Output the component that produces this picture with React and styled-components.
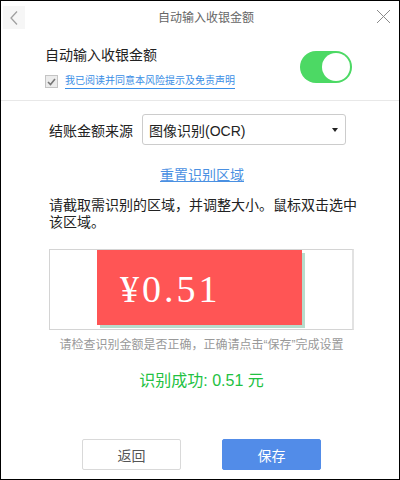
import styled, { createGlobalStyle } from 'styled-components';

const GlobalStyle = createGlobalStyle`
  html, body {
    margin: 0;
    padding: 0;
    background: #fff;
  }
  * {
    box-sizing: border-box;
  }
`;

const Window = styled.div`
  width: 400px;
  height: 480px;
  border: 1px solid #000;
  background: #fff;
  display: flex;
  flex-direction: column;
  font-family: "Liberation Sans", "Noto Sans CJK SC", sans-serif;
  color: #333;
`;

const Header = styled.div`
  height: 30px;
  display: flex;
  align-items: center;
  padding: 0 8px 0 2px;
`;

const BackButton = styled.button`
  width: 22px;
  height: 23px;
  margin-top: 3px;
  padding: 0;
  border: none;
  background: #f6f6f6;
  display: flex;
  align-items: center;
  justify-content: center;
  cursor: pointer;
`;

const HeaderTitle = styled.div`
  flex: 1;
  text-align: center;
  font-size: 12px;
  color: #666;
  padding-left: 12px;
`;

const CloseButton = styled.button`
  width: 16px;
  height: 16px;
  padding: 0;
  border: none;
  background: none;
  display: flex;
  align-items: center;
  justify-content: center;
  cursor: pointer;
`;

const TopSection = styled.div`
  height: 70px;
  padding: 3px 47px 0 44px;
  border-bottom: 1px solid #e8e8e8;
  display: flex;
  align-items: center;
  justify-content: space-between;
`;

const TopLeft = styled.div`
  display: flex;
  flex-direction: column;
  gap: 9px;
`;

const SectionTitle = styled.div`
  font-size: 14px;
  line-height: 20px;
  color: #222;
`;

const AgreeRow = styled.label`
  display: flex;
  align-items: center;
  gap: 7px;
  height: 16px;
`;

const CheckBox = styled.span`
  width: 13px;
  height: 13px;
  border: 1px solid #c4c4c4;
  background: #ececec;
  display: flex;
  align-items: center;
  justify-content: center;
`;

const AgreeLink = styled.a`
  font-size: 10px;
  line-height: 14px;
  color: #3a8ee6;
  text-decoration: none;
  border-bottom: 1px solid #3a8ee6;
`;

const Toggle = styled.div`
  width: 52px;
  height: 32px;
  border-radius: 16px;
  background: ${(p) => (p.$on ? '#4cd964' : '#ddd')};
  display: flex;
  align-items: center;
  justify-content: ${(p) => (p.$on ? 'flex-end' : 'flex-start')};
  padding: 2px;
`;

const Knob = styled.span`
  width: 28px;
  height: 28px;
  border-radius: 50%;
  background: #fff;
`;

const Body = styled.div`
  flex: 1;
  display: flex;
  flex-direction: column;
  padding: 13px 0 9px 48px;
`;

const SourceRow = styled.div`
  display: flex;
  align-items: center;
  height: 31px;
`;

const SourceLabel = styled.div`
  width: 93px;
  font-size: 14px;
  color: #222;
`;

const Select = styled.div`
  width: 204px;
  height: 31px;
  border: 1px solid #ccc;
  border-radius: 3px;
  display: flex;
  align-items: center;
  justify-content: space-between;
  padding: 0 7px 0 6px;
  font-size: 14px;
  color: #222;
`;

const Caret = styled.span`
  width: 0;
  height: 0;
  border-left: 3px solid transparent;
  border-right: 3px solid transparent;
  border-top: 4px solid #222;
`;

const ResetLink = styled.a`
  align-self: flex-start;
  margin: 21px 0 0 111px;
  font-size: 14px;
  line-height: 19px;
  color: #4a90e2;
  text-decoration: underline;
`;

const Instruction = styled.p`
  width: 312px;
  margin: 12px 0 0;
  font-size: 14px;
  line-height: 17px;
  color: #222;
`;

const CaptureBox = styled.div`
  width: 305px;
  height: 81px;
  margin-top: 18px;
  border: 1px solid #d4d4d4;
  border-right: 2px solid #e2e2e2;
  display: flex;
  align-items: flex-start;
`;

const Capture = styled.div`
  width: 205px;
  height: 75px;
  margin-left: 47px;
  background: #ff5555;
  box-shadow: 3px 3px 0 #b8dccc;
  display: flex;
  align-items: center;
  padding: 2px 0 0 23px;
  font-family: "Liberation Serif", "DejaVu Serif", serif;
  font-size: 38px;
  letter-spacing: 3px;
  color: #fff;
`;

const Hint = styled.div`
  width: 305px;
  margin-top: 7px;
  text-align: center;
  font-size: 12px;
  line-height: 16px;
  color: #999;
`;

const Success = styled.div`
  width: 305px;
  margin-top: 17px;
  text-align: center;
  font-size: 16px;
  line-height: 22px;
  color: #22c142;
`;

const Footer = styled.div`
  margin-top: auto;
  margin-left: 33px;
  display: flex;
  gap: 41px;
`;

const Button = styled.button`
  width: 99px;
  height: 31px;
  border-radius: 2px;
  font-family: inherit;
  font-size: 14px;
  cursor: pointer;
  border: 1px solid ${(p) => (p.$primary ? '#528ce8' : '#d9d9d9')};
  background: ${(p) => (p.$primary ? '#528ce8' : '#fff')};
  color: ${(p) => (p.$primary ? '#fff' : '#555')};
`;

const App = () => {
  return (
    <Window>
      <GlobalStyle />
      <Header>
        <BackButton aria-label="返回">
          <svg width="10" height="16" viewBox="0 0 10 16">
            <polyline points="8,1.5 2,8 8,14.5" fill="none" stroke="#a0a0a0" strokeWidth="1.3" />
          </svg>
        </BackButton>
        <HeaderTitle>自动输入收银金额</HeaderTitle>
        <CloseButton aria-label="关闭">
          <svg width="15" height="15" viewBox="0 0 15 15">
            <line x1="1" y1="1" x2="14" y2="14" stroke="#8a8a8a" strokeWidth="1" />
            <line x1="14" y1="1" x2="1" y2="14" stroke="#8a8a8a" strokeWidth="1" />
          </svg>
        </CloseButton>
      </Header>

      <TopSection>
        <TopLeft>
          <SectionTitle>自动输入收银金额</SectionTitle>
          <AgreeRow>
            <CheckBox>
              <svg width="9" height="8" viewBox="0 0 9 8">
                <polyline points="1,4 3.5,6.5 8,1" fill="none" stroke="#777" strokeWidth="1.6" />
              </svg>
            </CheckBox>
            <AgreeLink>我已阅读并同意本风险提示及免责声明</AgreeLink>
          </AgreeRow>
        </TopLeft>
        <Toggle $on>
          <Knob />
        </Toggle>
      </TopSection>

      <Body>
        <SourceRow>
          <SourceLabel>结账金额来源</SourceLabel>
          <Select>
            <span>图像识别(OCR)</span>
            <Caret />
          </Select>
        </SourceRow>
        <ResetLink>重置识别区域</ResetLink>
        <Instruction>请截取需识别的区域，并调整大小。鼠标双击选中该区域。</Instruction>
        <CaptureBox>
          <Capture>¥0.51</Capture>
        </CaptureBox>
        <Hint>请检查识别金额是否正确，正确请点击“保存”完成设置</Hint>
        <Success>识别成功: 0.51 元</Success>
        <Footer>
          <Button>返回</Button>
          <Button $primary>保存</Button>
        </Footer>
      </Body>
    </Window>
  );
};

export default App;
